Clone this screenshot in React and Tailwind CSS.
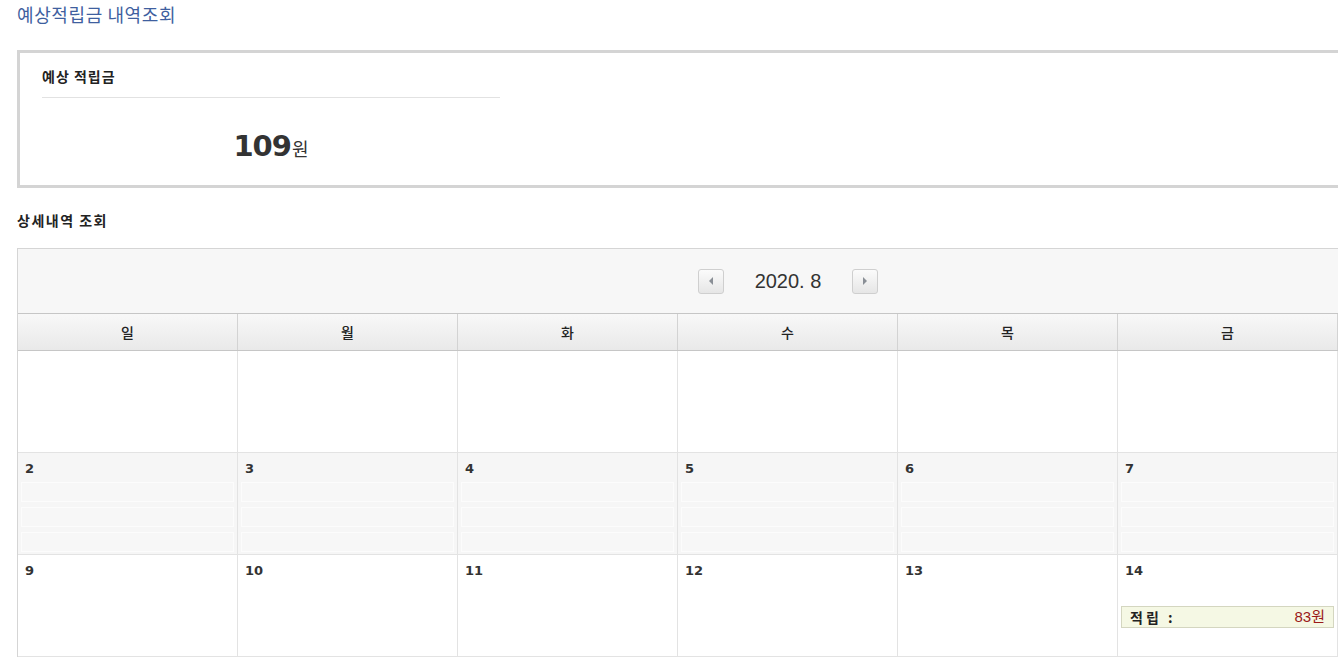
import React from 'react';

// 토요일 칸은 화면 밖으로 잘려 보이지 않으므로 빈 칸으로 둔다
const days = ['일', '월', '화', '수', '목', '금'];

const weeks = [
  { shade: false, cells: [null, null, null, null, null, null] },
  { shade: true, cells: [2, 3, 4, 5, 6, 7] },
  { shade: false, cells: [9, 10, 11, 12, 13, 14] },
];

const earnings = { 14: 83 };

const App = () => {
  return (
    <div className="w-[1338px] h-[657px] overflow-hidden bg-white font-['Noto_Sans_CJK_KR',sans-serif] text-[#333]">
      <div className="pl-[17px]">
        <h1 className="pt-[3px] h-[50px] text-[18px] leading-[22px] text-[#3f5f9f] tracking-[0.6px]">
          예상적립금 내역조회
        </h1>

        {/* summary box */}
        <div className="w-[1400px] h-[138px] border-[3px] border-[#d4d4d4] pl-[22px] pt-[13px]">
          <div className="w-[458px] h-[32px] border-b border-[#e2e2e2] text-[14px] leading-[20px] font-bold text-[#222] tracking-[1px]">
            예상 적립금
          </div>
          <div className="w-[458px] pt-[30px] text-center">
            <span className="font-['DejaVu_Sans',sans-serif] font-bold text-[29px] leading-[36px] text-[#333] tracking-[-1px]">
              109
            </span>
            <span className="text-[18px] leading-[36px] text-[#333] ml-[1px]">원</span>
          </div>
        </div>

        <h2 className="mt-[22px] h-[38px] text-[14px] leading-[20px] font-bold text-[#222] tracking-[1.5px]">
          상세내역 조회
        </h2>

        {/* calendar */}
        <div className="w-[1541px] border-l border-t border-[#d5d5d5]">
          <div className="h-[64px] bg-[#f7f7f7] flex items-center justify-center">
            <button className="w-[26px] h-[25px] rounded-[3px] border border-[#cfcfcf] bg-gradient-to-b from-[#fbfbfb] to-[#e6e6e6] flex items-center justify-center">
              <svg width="6" height="8" viewBox="0 0 6 8">
                <path d="M5 0 L1 4 L5 8 Z" fill="#8a8f96" />
              </svg>
            </button>
            <span className="w-[128px] text-center font-['Liberation_Sans',sans-serif] text-[20px] leading-[24px] text-[#333]">
              2020. 8
            </span>
            <button className="w-[26px] h-[25px] rounded-[3px] border border-[#cfcfcf] bg-gradient-to-b from-[#fbfbfb] to-[#e6e6e6] flex items-center justify-center">
              <svg width="6" height="8" viewBox="0 0 6 8">
                <path d="M1 0 L5 4 L1 8 Z" fill="#8a8f96" />
              </svg>
            </button>
          </div>

          <div className="grid grid-cols-[repeat(6,220px)_1fr] h-[38px] border-t border-b border-[#c6c6c6] bg-gradient-to-b from-[#f8f8f8] to-[#e9e9e9]">
            {days.map(d => (
              <div
                key={d}
                className="border-r border-[#d3d3d3] flex items-center justify-center text-[14px] font-medium text-[#222]"
              >
                {d}
              </div>
            ))}
            <div />
          </div>

          {weeks.map((w, wi) => (
            <div
              key={wi}
              className={`grid grid-cols-[repeat(6,220px)_1fr] h-[102px] border-b border-[#e3e3e3] ${
                w.shade ? 'bg-[#f6f6f6]' : 'bg-white'
              }`}
            >
              {w.cells.map((c, ci) => (
                <div key={ci} className="border-r border-[#e3e3e3] px-[3px] pt-[7px]">
                  {c && (
                    <div className="pl-[4px] h-[18px] font-['DejaVu_Sans',sans-serif] font-bold text-[13px] leading-[18px] text-[#333]">
                      {c}
                    </div>
                  )}
                  {c && w.shade && (
                    <div className="mt-[4px] flex flex-col gap-[5px]">
                      <div className="h-[20px] bg-[#f7f7f7] border border-[#fcfcfc]" />
                      <div className="h-[20px] bg-[#f7f7f7] border border-[#fcfcfc]" />
                      <div className="h-[20px] bg-[#f7f7f7] border border-[#fcfcfc]" />
                    </div>
                  )}
                  {c && earnings[c] && (
                    <div className="mt-[26px] h-[22px] bg-[#f5f8e4] border border-[#d4d6c0] flex items-center justify-between px-[8px]">
                      <span className="text-[14px] font-bold text-[#222] tracking-[3px]">적립 :</span>
                      <span className="font-['Liberation_Sans',sans-serif] text-[15px] text-[#9b1a1a]">
                        {earnings[c]}
                        <span className="font-['Noto_Sans_CJK_KR',sans-serif]">원</span>
                      </span>
                    </div>
                  )}
                </div>
              ))}
              <div />
            </div>
          ))}
        </div>
      </div>
    </div>
  );
};

export default App;
